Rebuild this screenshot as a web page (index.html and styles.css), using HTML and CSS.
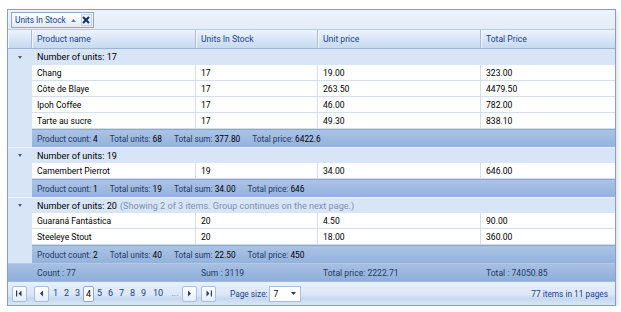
FILE: index.html
```html
<!DOCTYPE html>
<html lang="en">
<head>
  <meta charset="UTF-8">
  <title>Products by units in stock</title>
  <link rel="stylesheet" href="styles.css">
</head>
<body>

  <div class="grade">

    <div class="painel-grupo">
      <span class="chip">
        Units In Stock
        <svg class="chip-seta" width="5" height="3" viewBox="0 0 5 3"><polygon points="0,3 5,3 2.5,0" fill="#6b7c95"/></svg>
        <span class="chip-x">
          <svg width="8" height="8" viewBox="0 0 8 8"><path d="M1 1 L7 7 M7 1 L1 7" stroke="#15315e" stroke-width="2"/></svg>
        </span>
      </span>
    </div>

    <div class="linha cabecalho">
      <div class="cel indent"></div>
      <div class="cel">Product name</div>
      <div class="cel">Units In Stock</div>
      <div class="cel">Unit price</div>
      <div class="cel">Total Price</div>
    </div>

    <!-- grupo 17 -->
    <div class="linha grupo primeiro">
      <div class="cel indent"><span class="expandir"></span></div>
      <div class="cel titulo">Number of units: 17</div>
    </div>
    <div class="linha dados">
      <div class="cel indent"></div>
      <div class="cel">Chang</div><div class="cel">17</div><div class="cel">19.00</div><div class="cel">323.00</div>
    </div>
    <div class="linha dados">
      <div class="cel indent"></div>
      <div class="cel">Côte de Blaye</div><div class="cel">17</div><div class="cel">263.50</div><div class="cel">4479.50</div>
    </div>
    <div class="linha dados">
      <div class="cel indent"></div>
      <div class="cel">Ipoh Coffee</div><div class="cel">17</div><div class="cel">46.00</div><div class="cel">782.00</div>
    </div>
    <div class="linha dados">
      <div class="cel indent"></div>
      <div class="cel">Tarte au sucre</div><div class="cel">17</div><div class="cel">49.30</div><div class="cel">838.10</div>
    </div>
    <div class="linha rodape-grupo">
      <div class="cel indent"></div>
      <div class="cel resumo">
        <span>Product count: <b>4</b></span>
        <span>Total units: <b>68</b></span>
        <span>Total sum: <b>377.80</b></span>
        <span>Total price: <b>6422.6</b></span>
      </div>
    </div>

    <!-- grupo 19 -->
    <div class="linha grupo">
      <div class="cel indent"><span class="expandir"></span></div>
      <div class="cel titulo">Number of units: 19</div>
    </div>
    <div class="linha dados">
      <div class="cel indent"></div>
      <div class="cel">Camembert Pierrot</div><div class="cel">19</div><div class="cel">34.00</div><div class="cel">646.00</div>
    </div>
    <div class="linha rodape-grupo">
      <div class="cel indent"></div>
      <div class="cel resumo">
        <span>Product count: <b>1</b></span>
        <span>Total units: <b>19</b></span>
        <span>Total sum: <b>34.00</b></span>
        <span>Total price: <b>646</b></span>
      </div>
    </div>

    <!-- grupo 20 -->
    <div class="linha grupo">
      <div class="cel indent"><span class="expandir"></span></div>
      <div class="cel titulo">Number of units: 20 <span class="aviso">(Showing 2 of 3 items. Group continues on the next page.)</span></div>
    </div>
    <div class="linha dados">
      <div class="cel indent"></div>
      <div class="cel">Guaraná Fantástica</div><div class="cel">20</div><div class="cel">4.50</div><div class="cel">90.00</div>
    </div>
    <div class="linha dados">
      <div class="cel indent"></div>
      <div class="cel">Steeleye Stout</div><div class="cel">20</div><div class="cel">18.00</div><div class="cel">360.00</div>
    </div>
    <div class="linha rodape-grupo">
      <div class="cel indent"></div>
      <div class="cel resumo">
        <span>Product count: <b>2</b></span>
        <span>Total units: <b>40</b></span>
        <span>Total sum: <b>22.50</b></span>
        <span>Total price: <b>450</b></span>
      </div>
    </div>

    <div class="linha rodape-total">
      <div class="cel indent"></div>
      <div class="cel">Count : 77</div>
      <div class="cel">Sum : 3119</div>
      <div class="cel">Total price: 2222.71</div>
      <div class="cel">Total : 74050.85</div>
    </div>

    <div class="paginador">
      <span class="botao b-primeiro">
        <svg width="7" height="7" viewBox="0 0 7 7"><rect x="0" y="0.5" width="1.2" height="6" fill="#2a3d5c"/><polygon points="5.5,0.5 5.5,6.5 2.5,3.5" fill="#2a3d5c"/></svg>
      </span>
      <span class="botao b-anterior">
        <svg width="7" height="7" viewBox="0 0 7 7"><polygon points="5,0.5 5,6.5 2,3.5" fill="#2a3d5c"/></svg>
      </span>
      <div class="paginas">
        <span>1</span><span>2</span><span>3</span><span class="atual">4</span><span>5</span><span>6</span><span>7</span><span>8</span><span>9</span><span class="dez">10</span><span class="mais">...</span>
      </div>
      <span class="botao b-proximo">
        <svg width="7" height="7" viewBox="0 0 7 7"><polygon points="2,0.5 2,6.5 5,3.5" fill="#2a3d5c"/></svg>
      </span>
      <span class="botao b-ultimo">
        <svg width="7" height="7" viewBox="0 0 7 7"><polygon points="1.5,0.5 1.5,6.5 4.5,3.5" fill="#2a3d5c"/><rect x="5.8" y="0.5" width="1.2" height="6" fill="#2a3d5c"/></svg>
      </span>
      <span class="rotulo">Page size:</span>
      <span class="combo">
        7
        <svg width="5" height="3" viewBox="0 0 5 3"><polygon points="0,0 5,0 2.5,3" fill="#2a3d5c"/></svg>
      </span>
      <span class="info">77 items in 11 pages</span>
    </div>

  </div>

</body>
</html>
```

FILE: styles.css
```css
/* Estilos gerais */
body {
  margin: 0;
  background-color: #ffffff;
  font-family: Roboto, "Liberation Sans", sans-serif;
  font-size: 8.6px;
  color: #000;
}

.grade {
  margin: 9px 0 0 7px;
  width: 607px;
  border: 1px solid #869fc2;
  box-shadow: 2px 2px 4px rgba(0,0,0,0.12);
}

/* painel de agrupamento */
.painel-grupo {
  height: 19px;
  box-sizing: border-box;
  padding: 2px 3px 0;
  background: linear-gradient(#eef4fc, #e3ecf8);
}

.chip {
  display: inline-flex;
  align-items: center;
  height: 16px;
  box-sizing: border-box;
  padding: 0 1px 0 3px;
  border: 1px solid #8da8cc;
  background: linear-gradient(#ffffff, #e2ebf7);
  color: #15428b;
  font-size: 8.3px;
}

.chip-seta {
  margin: 0 5px 0 5px;
}

.chip-x {
  display: inline-flex;
  align-items: center;
  justify-content: center;
  width: 11px;
  height: 12px;
  border: 1px solid #c3d3e9;
  background: #e9f0fa;
  box-sizing: border-box;
}

/* linhas */
.linha {
  display: grid;
  grid-template-columns: 24px 164px 122px 163px 1fr;
}

.cel {
  display: flex;
  align-items: center;
  padding-left: 5px;
  white-space: nowrap;
  overflow: hidden;
  box-sizing: border-box;
}

.indent {
  padding: 0;
  justify-content: center;
  background-color: #d7e5f6;
}

.cabecalho {
  height: 20px;
  border-top: 1px solid #b8cbe5;
  border-bottom: 1px solid #9db4d4;
  box-sizing: border-box;
  background: linear-gradient(#ecf3fc, #c6d9f0);
  color: #15428b;
}

.cabecalho .cel {
  border-right: 1px solid #a6bcd9;
  box-shadow: inset 1px 0 #f4f8fd;
}

.cabecalho .indent {
  background: none;
}

.cabecalho .cel:last-child {
  border-right: none;
}

.grupo {
  height: 16px;
  background-color: #d7e5f6;
  border-top: 1px solid #eef4fc;
  box-sizing: border-box;
  font-size: 9.1px;
}

.grupo.primeiro {
  border-top: none;
}

.titulo {
  grid-column: 2 / -1;
}

.aviso {
  color: #7b90b2;
  margin-left: 3px;
}

.expandir {
  width: 0;
  height: 0;
  border-left: 2.5px solid transparent;
  border-right: 2.5px solid transparent;
  border-top: 3px solid #4c5f80;
}

.dados {
  height: 16px;
}

.dados .cel {
  background-color: #ffffff;
  border-right: 1px solid #d5dfeb;
  border-bottom: 1px solid #d5dfeb;
}

.dados .indent {
  background-color: #d7e5f6;
  border: none;
}

.dados .cel:last-child {
  border-right: none;
}

/* rodapés */
.rodape-grupo {
  height: 18px;
}

.resumo {
  grid-column: 2 / -1;
  gap: 12px;
  border-top: 1px solid #87a6d3;
  background: linear-gradient(#abc3e5, #93b2dc);
  color: #1f3a63;
  font-size: 8.3px;
}

.resumo b {
  font-weight: normal;
  color: #000;
}

.rodape-total {
  height: 18px;
  border-top: 1px solid #b4c9e8;
  box-sizing: border-box;
  background: linear-gradient(#a7c0e2, #8eaedb);
  color: #1f3a63;
}

.rodape-total .indent {
  background: none;
}

/* paginador */
.paginador {
  display: flex;
  align-items: center;
  height: 24px;
  padding: 0 7px 0 4px;
  border-top: 1px solid #9fb7d8;
  box-sizing: border-box;
  background: linear-gradient(#e8f0fb 0%, #dbe6f6 55%, #c6d8f0 72%, #d9e6f6 100%);
  color: #15428b;
  white-space: nowrap;
}

.botao {
  display: inline-flex;
  align-items: center;
  justify-content: center;
  flex-shrink: 0;
  width: 15px;
  height: 16px;
  box-sizing: border-box;
  border: 1px solid #a8bedb;
  border-radius: 2px;
  background: linear-gradient(#ffffff, #e3ecf8);
}

.b-primeiro {
  margin-right: 7px;
}

.b-anterior,
.b-proximo {
  margin-right: 4px;
}

.b-ultimo {
  margin-right: 14px;
}

.paginas {
  display: flex;
  margin: 0 -1px 0 -3px;
}

.paginas span {
  min-width: 11px;
  height: 16px;
  line-height: 14px;
  box-sizing: border-box;
  text-align: center;
  font-size: 9px;
}

.paginas .atual {
  border: 1px solid #8da8cc;
  border-radius: 2px;
  background-color: #ffffff;
  color: #000;
}

.paginas .dez {
  min-width: 18px;
}

.paginas .mais {
  min-width: 16px;
  color: #6f86ab;
}

.rotulo {
  font-size: 8.3px;
  margin-right: 1px;
  flex-shrink: 0;
}

.combo {
  display: inline-flex;
  align-items: center;
  justify-content: space-between;
  flex-shrink: 0;
  width: 32px;
  height: 16px;
  padding: 0 4px;
  box-sizing: border-box;
  border: 1px solid #a8bedb;
  background-color: #ffffff;
  color: #000;
}

.info {
  margin-left: auto;
  font-size: 8.3px;
}
```
